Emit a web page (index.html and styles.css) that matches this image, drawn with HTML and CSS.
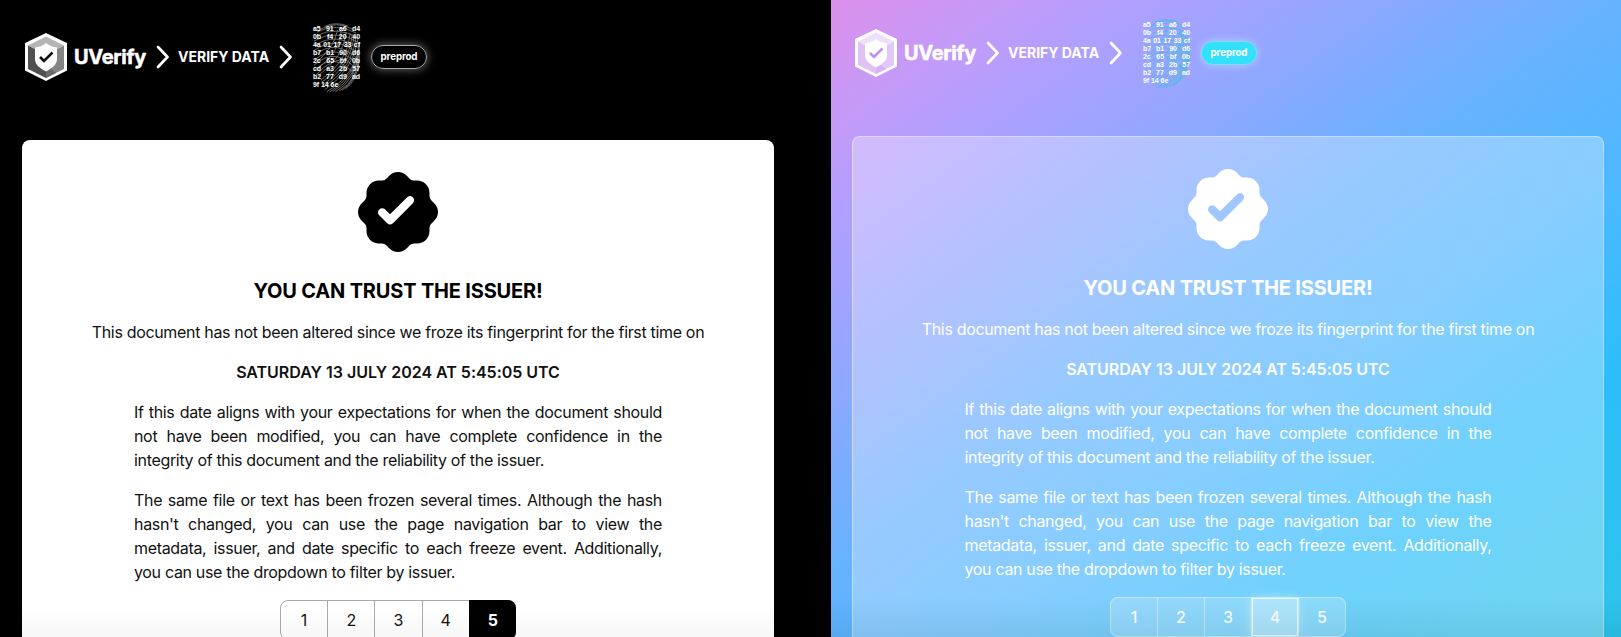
FILE: index.html
```html
<!DOCTYPE html>
<html lang="en">
<head>
<meta charset="utf-8">
<title>UVerify</title>
<link rel="stylesheet" href="styles.css">
</head>
<body>
<svg class="defs" width="0" height="0">
  <defs>
    <symbol id="logo" viewBox="0 0 42 48">
      <path class="logo-edge" d="M21 0 42 10V37.500L21 48 0 37.500V10z"/>
      <path class="logo-top" d="M21 3.500 39 12.500 21 22 3 12.500z"/>
      <path class="logo-left" d="M3 12.500 21 22V45L3 36z"/>
      <path class="logo-right" d="M39 12.500 21 22V45L39 36z"/>
      <path class="logo-low" d="M21 32 31 40 21 45z"/>
      <path class="logo-shield" d="M21 10C17 13 14 14 10 14.500V26C10 32 15 35 21 38.500 27 35 32 32 32 26V14.500C28 14 25 13 21 10z"/>
      <path class="logo-check" d="M15 24 19 28 27.500 19.500" fill="none" stroke-width="2.600"/>
    </symbol>
    <symbol id="chevron" viewBox="0 0 14 24">
      <path d="M2 2 11.500 12 2 22" fill="none" stroke="#fff" stroke-width="2.700" stroke-linejoin="round" stroke-linecap="round"/>
    </symbol>
    <symbol id="badge" viewBox="0 0 80 80">
      <path fill-rule="evenodd" fill="currentColor" d="M40 0C43.500 0 46.500 1.500 49 4L52 7Q53.500 8.500 56 8.500H59C66 8.500 71.500 14 71.500 21V24Q71.500 26.500 73 28L76 31C78.500 33.500 80 36.500 80 40C80 43.500 78.500 46.500 76 49L73 52Q71.500 53.500 71.500 56V59C71.500 66 66 71.500 59 71.500H56Q53.500 71.500 52 73L49 76C46.500 78.500 43.500 80 40 80C36.500 80 33.500 78.500 31 76L28 73Q26.500 71.500 24 71.500H21C14 71.500 8.500 66 8.500 59V56Q8.500 53.500 7 52L4 49C1.500 46.500 0 43.500 0 40C0 36.500 1.500 33.500 4 31L7 28Q8.500 26.500 8.500 24V21C8.500 14 14 8.500 21 8.500H24Q26.500 8.500 28 7L31 4C33.500 1.500 36.500 0 40 0ZM32 42.300 27 37.300C24.500 34.800 20 36.500 20 40.500C20 41.500 20.500 42.500 21.200 43.200L29.200 51.200C31 52.900 33.200 52.900 34.900 51.200L54.900 31.200C58.500 27.500 53.500 21.500 49.200 25.200Z"/>
    </symbol>
    <symbol id="print" viewBox="0 0 48 72">
      <g fill="none" stroke="currentColor" stroke-width=".8">
        <path d="M12 3Q24-2 36 3M8 6Q24-3 40 6M4 9Q24-1 44 10M3 13Q24 2 46 15M1 18Q24 5 47 20M1 23Q24 8 47 26M1 28Q24 11 47 32M1 33Q24 14 47 38M1 38Q24 18 47 44M1 43Q24 22 46 49M2 48Q22 27 44 54M3 53Q20 34 35 38"/>
        <path d="M48 20Q44 52 14 70M48 26Q44 56 20 70M48 32Q45 59 27 69M47 40Q44 60 33 67M46 16Q41 48 12 68M42 12Q39 43 10 63M38 10Q36 39 8 58M34 9Q31 35 6 53M29 8Q27 30 4 47M25 7Q22 25 2 41M47 23Q44 54 17 70M47 29Q44 58 23 70M47 36Q44 60 30 68M44 14Q40 46 11 65M40 11Q38 41 9 60"/>
      </g>
    </symbol>
  </defs>
</svg>
<main class="compare">
  <section class="pane dark">
    <header class="bar">
      <svg class="logo"><use href="#logo"/></svg>
      <span class="brand">UVerify</span>
      <svg class="chevron"><use href="#chevron"/></svg>
      <span class="crumb">VERIFY DATA</span>
      <svg class="chevron"><use href="#chevron"/></svg>
      <div class="hash">
        <svg class="print"><use href="#print"/></svg>
        <div class="bytes"><p>a5 91 a6 d4</p><p>0b f4 20 40</p><p>4a 01 17 33 cf</p><p>b7 b1 90 d6</p><p>2c 65 bf 0b</p><p>cd a3 2b 57</p><p>b2 77 d9 ad</p><p class="end">9f 14 6e</p></div>
      </div>
      <span class="tag">preprod</span>
    </header>
    <article class="card">
      <svg class="badge"><use href="#badge"/></svg>
      <h1>YOU CAN TRUST THE ISSUER!</h1>
      <p class="lead">This document has not been altered since we froze its fingerprint for the first time on</p>
      <p class="date">SATURDAY 13 JULY 2024 AT 5:45:05 UTC</p>
      <p class="text">If this date aligns with your expectations for when the document should not have been modified, you can have complete confidence in the integrity of this document and the reliability of the issuer.</p>
      <p class="text">The same file or text has been frozen several times. Although the hash hasn't changed, you can use the page navigation bar to view the metadata, issuer, and date specific to each freeze event. Additionally, you can use the dropdown to filter by issuer.</p>
      <nav class="pages"><a>1</a><a>2</a><a>3</a><a>4</a><a class="on">5</a></nav>
    </article>
  </section>
  <section class="pane color">
    <header class="bar">
      <svg class="logo"><use href="#logo"/></svg>
      <span class="brand">UVerify</span>
      <svg class="chevron"><use href="#chevron"/></svg>
      <span class="crumb">VERIFY DATA</span>
      <svg class="chevron"><use href="#chevron"/></svg>
      <div class="hash">
        <svg class="print"><use href="#print"/></svg>
        <div class="bytes"><p>a5 91 a6 d4</p><p>0b f4 20 40</p><p>4a 01 17 33 cf</p><p>b7 b1 90 d6</p><p>2c 65 bf 0b</p><p>cd a3 2b 57</p><p>b2 77 d9 ad</p><p class="end">9f 14 6e</p></div>
      </div>
      <span class="tag">preprod</span>
    </header>
    <article class="card">
      <svg class="badge"><use href="#badge"/></svg>
      <h1>YOU CAN TRUST THE ISSUER!</h1>
      <p class="lead">This document has not been altered since we froze its fingerprint for the first time on</p>
      <p class="date">SATURDAY 13 JULY 2024 AT 5:45:05 UTC</p>
      <p class="text">If this date aligns with your expectations for when the document should not have been modified, you can have complete confidence in the integrity of this document and the reliability of the issuer.</p>
      <p class="text">The same file or text has been frozen several times. Although the hash hasn't changed, you can use the page navigation bar to view the metadata, issuer, and date specific to each freeze event. Additionally, you can use the dropdown to filter by issuer.</p>
      <nav class="pages"><a>1</a><a>2</a><a>3</a><a class="on">4</a><a>5</a></nav>
    </article>
  </section>
</main>
</body>
</html>
```
FILE: styles.css
```css
* { box-sizing: border-box; }
body { margin: 0; background: #000; overflow: hidden; font-family: Inter, "Liberation Sans", sans-serif; font-size: 16px; line-height: 24px; }
p, h1 { margin: 0; }
.defs { display: block; height: 0; }
.compare { display: grid; grid-template-columns: 831px 790px; height: 637px; overflow: hidden; }
.pane { position: relative; height: 637px; overflow: hidden; color: #fff; }
.pane::after { content: ""; position: absolute; left: 0; right: 0; bottom: 0; height: 30px; background: linear-gradient(rgba(0,0,0,0), rgba(0,0,0,.03)); }
.color::after { height: 40px; background: linear-gradient(rgba(0,40,60,0), rgba(0,40,60,.08)); }
.dark { background: #000; padding: 0 57px 0 22px; }
.color { padding: 0 17px 0 21px; background: linear-gradient(144deg, #dc8feb 0%, #c39bf8 11%, #afa0ff 19%, #99a5ff 28%, #67b2ff 47%, #50b8ff 61%, #2dbefa 78%, #2dc3ee 94%, #2dc4ea 100%); }
.bar { display: flex; align-items: center; height: 114px; padding-left: 3px; white-space: nowrap; }
.color .bar { height: 106px; }
.logo { width: 42px; height: 48px; flex: none; }
.logo-edge, .logo-shield { fill: #fff; }
.dark { --top: #b5b5b5; --left: #505050; --right: #848484; --low: #6a6a6a; --check: #111; }
.color { --top: #efdffb; --left: #dfc0f7; --right: #e2c8f8; --low: #d8b4f5; --check: #bb91ee; }
.logo-top { fill: var(--top); }
.logo-left { fill: var(--left); }
.logo-right { fill: var(--right); }
.logo-low { fill: var(--low); }
.logo-check { stroke: var(--check); }
.brand { width: 72px; margin-left: 7px; font-size: 20px; font-weight: 700; letter-spacing: -.3px; -webkit-text-stroke: .5px #fff; }
.chevron { width: 14px; height: 24px; flex: none; margin-left: 10px; }
.crumb { width: 91px; margin-left: 8px; font-size: 14px; font-weight: 700; letter-spacing: 0; }
.hash { position: relative; width: 47px; height: 65px; margin-left: 20px; flex: none; }
.print { position: absolute; left: 0; top: -2px; width: 47px; height: 71px; color: #858585; }
.color .print { color: #42bbdc; }
.bytes { position: relative; font-family: "Liberation Sans", sans-serif; font-size: 7px; font-weight: 700; line-height: 8px; letter-spacing: -.05px; }
.bytes p { text-align-last: justify; height: 8px; }
.bytes .end { text-align-last: left; }
.tag { width: 56px; height: 24px; margin-left: 11px; border: 1px solid #aaa; border-radius: 12px; font-size: 9.8px; font-weight: 700; line-height: 22px; letter-spacing: -.15px; text-align: center; box-shadow: 0 0 10px rgba(255,255,255,.45); }
.color .tag { background: #32e0fa; border-color: #7cdcfa; box-shadow: 0 0 8px rgba(200,230,255,.6); }
.card { display: flex; flex-direction: column; align-items: center; width: 752px; height: 560px; margin-top: 26px; padding-top: 32px; border-radius: 8px; background: #fff; color: #111; }
.color .card { margin-top: 30px; padding-top: 32px; border: 1px solid rgba(255,255,255,.4); background: rgba(255,255,255,.31); color: #fff; }
.badge { width: 80px; height: 80px; flex: none; }
.dark .badge, .dark h1 { color: #000; }
h1 { margin-top: 25px; font-size: 20px; line-height: 28px; font-weight: 700; letter-spacing: -.18px; white-space: nowrap; }
.lead { margin-top: 15px; white-space: nowrap; letter-spacing: -.33px; }
.date { margin-top: 16px; font-weight: 600; white-space: nowrap; letter-spacing: -.02px; }
.text { width: 528px; margin-top: 16px; letter-spacing: -.33px; text-align: justify; }
.color .text { width: 527px; }
.pages { display: flex; flex: none; margin-top: 16px; width: 236px; height: 40px; border: 1px solid #aaa; border-radius: 8px; }
.pages a { flex: 1; display: grid; place-items: center; border-left: 1px solid #aaa; }
.pages a:first-child { border-left: 0; }
.dark .on { margin: -1px -1px -1px 0; background: #000; color: #fff; font-weight: 700; border-color: #000; border-radius: 0 8px 8px 0; }
.color .pages { border-color: rgba(255,255,255,.4); background: rgba(255,255,255,.2); }
.color .pages a { border-color: rgba(255,255,255,.45); font-weight: 500; }
.color .on { background: rgba(255,255,255,.3); box-shadow: 0 0 10px rgba(255,255,255,.45), inset 0 0 0 1px rgba(255,255,255,.8); }
```
